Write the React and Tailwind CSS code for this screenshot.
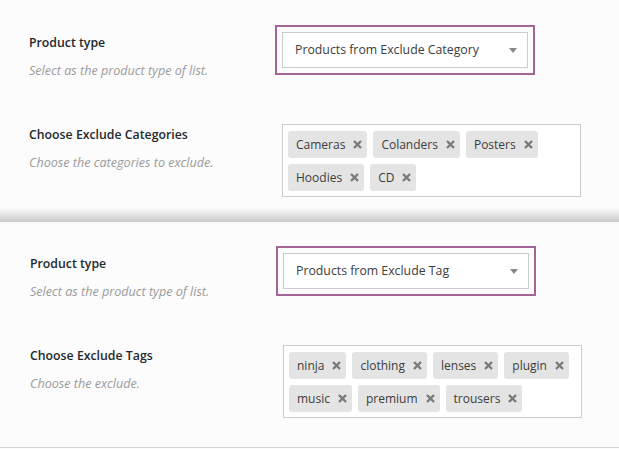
import React from "react";

const font = { fontFamily: '"Open Sans", "Noto Sans", sans-serif' };

function XIcon() {
  return (
    <svg width="9" height="9" viewBox="0 0 9 9" className="shrink-0">
      <path d="M1 1 L8 8 M8 1 L1 8" stroke="#7a7a7a" strokeWidth="2.4" strokeLinecap="butt" />
    </svg>
  );
}

function Tag({ label }) {
  return (
    <div className="flex items-center h-[27px] rounded-[3px] bg-[#e4e4e4] pl-[8px] pr-[5px] gap-[8px]">
      <span className="text-[12px] text-[#3c3c3c] leading-none pt-[1px]">{label}</span>
      <XIcon />
    </div>
  );
}

function Field({ title, desc, children, first }) {
  return (
    <div className="flex items-start">
      <div className={`w-[246px] shrink-0 ${first ? "pt-[9px]" : "pt-[2px]"}`}>
        <div className="text-[12.3px] leading-[18px] font-semibold text-[#23282d]">{title}</div>
        <div className="mt-[10px] text-[12.6px] leading-[18px] italic text-[#9a9a9a]">{desc}</div>
      </div>
      {children}
    </div>
  );
}

function Select({ value }) {
  return (
    <div className="w-[260px] h-[50px] border-2 border-[#a46497] p-[5px]">
      <div className="h-full border border-[#cccccc] bg-white flex items-center justify-between pl-[12px] pr-[10px]">
        <span className="text-[12.3px] text-[#3c3c3c] pt-[1px]">{value}</span>
        <svg width="8" height="5" viewBox="0 0 8 5">
          <path d="M0 0 L8 0 L4 5 Z" fill="#888" />
        </svg>
      </div>
    </div>
  );
}

function TagBox({ tags }) {
  return (
    <div className="ml-[7px] w-[299px] border border-[#cccccc] bg-white pt-[6px] pb-[5px] px-[5px] flex flex-wrap gap-x-[6px] gap-y-[6px] content-start">
      {tags.map((t) => (
        <Tag key={t} label={t} />
      ))}
    </div>
  );
}

function Panel({ type, listTitle, listDesc, tags, pl, pt }) {
  return (
    <div className={`${pl} ${pt} flex flex-col gap-[44px]`}>
      <Field title="Product type" desc="Select as the product type of list." first>
        <Select value={type} />
      </Field>
      <Field title={listTitle} desc={listDesc}>
        <TagBox tags={tags} />
      </Field>
    </div>
  );
}

export default function App() {
  return (
    <div className="w-[619px] h-[449px] overflow-hidden bg-[#fcfcfc]" style={font}>
      <div className="pb-[11px]">
        <Panel
          pl="pl-[29px]"
          pt="pt-[25px]"
          type="Products from Exclude Category"
          listTitle="Choose Exclude Categories"
          listDesc="Choose the categories to exclude."
          tags={["Cameras", "Colanders", "Posters", "Hoodies", "CD"]}
        />
      </div>
      <div className="h-[14px] bg-gradient-to-b from-[#fcfcfc] to-[#c9c9c9]" />
      <div className="border-b border-[#d4d4d4] pb-[29px]">
        <Panel
          pl="pl-[30px]"
          pt="pt-[24px]"
          type="Products from Exclude Tag"
          listTitle="Choose Exclude Tags"
          listDesc="Choose the exclude."
          tags={["ninja", "clothing", "lenses", "plugin", "music", "premium", "trousers"]}
        />
      </div>
    </div>
  );
}
